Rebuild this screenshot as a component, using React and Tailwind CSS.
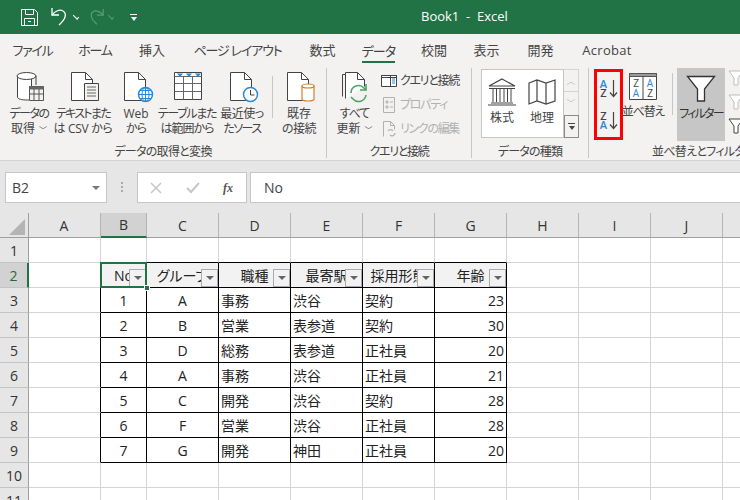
import React from 'react';

const FONT = "font-['Open_Sans','Noto_Sans_CJK_JP',sans-serif] [font-feature-settings:'palt']";

const TABS = [
  { label: 'ファイル', w: 'w-[65px]', t: 'tracking-[-1.300px]' },
  { label: 'ホーム', w: 'w-[60px]', t: 'tracking-[-1.200px]' },
  { label: '挿入', w: 'w-[54px]', t: '' },
  { label: 'ページ レイアウト', w: 'w-[117px]', t: 'tracking-[-1.200px]' },
  { label: '数式', w: 'w-[53px]', t: '' },
  { label: 'データ', w: 'w-[59px]', t: 'tracking-[-0.800px]', active: true },
  { label: '校閲', w: 'w-[52px]', t: '' },
  { label: '表示', w: 'w-[53px]', t: '' },
  { label: '開発', w: 'w-[55px]', t: '' },
  { label: 'Acrobat', w: 'w-[78px]', t: 'tracking-[0.3px]' },
];

const COLS = ['A', 'B', 'C', 'D', 'E', 'F', 'G', 'H', 'I', 'J', ''];

const HEADERS = ['No', 'グループ', '職種', '最寄駅', '採用形態', '年齢'];
const ROWS = [
  ['1', 'A', '事務', '渋谷', '契約', '23'],
  ['2', 'B', '営業', '表参道', '契約', '30'],
  ['3', 'D', '総務', '表参道', '正社員', '20'],
  ['4', 'A', '事務', '渋谷', '正社員', '21'],
  ['5', 'C', '開発', '渋谷', '契約', '28'],
  ['6', 'F', '営業', '渋谷', '正社員', '28'],
  ['7', 'G', '開発', '神田', '正社員', '20'],
];

function Doc({ children }) {
  return (
    <svg width="36" height="32" viewBox="0 0 36 32" fill="none">
      <path d="M6.5 1.5h14l7 7v21h-21z" fill="#fff" stroke="#444" />
      <path d="M20.5 1.5v7h7" stroke="#444" />
      {children}
    </svg>
  );
}

function DbIcon() {
  return (
    <svg width="36" height="32" viewBox="0 0 36 32" fill="none">
      <g transform="translate(3 0)">
        <path d="M3.500 5v21c0 2 4 3 10 3h4V5" fill="#fff" stroke="#444" />
        <ellipse cx="12.500" cy="5" rx="9.500" ry="3.500" fill="#fff" stroke="#444" />
        <path d="M22 5v9" stroke="#444" />
        <path d="M15 15h15v15H15z" fill="#f3f2f1" />
        <path d="M15.500 15.500h14v14h-14z" stroke="#555" />
        <path d="M15.500 15.500h14v3h-14z" fill="#666" />
        <path d="M15.500 23h14M20 18v11M25 18v11" stroke="#555" />
      </g>
    </svg>
  );
}

function TableIcon() {
  return (
    <svg width="32" height="30" viewBox="0 0 32 30" fill="none">
      <path d="M3.500 1.500h27v27h-27z" fill="#fff" stroke="#444" />
      <path d="M3.500 5.500h27M3.500 12.500h27M3.500 20.500h27M12.500 5.500v23M21.500 5.500v23" stroke="#666" />
      <path d="M6 2.500h6l-3 3.500zM15 2.500h6l-3 3.500zM24 2.500h6l-3 3.500z" fill="#2b88d8" />
    </svg>
  );
}

function BigButton({ w, icon, lines, chevron, t1 = '', t2 = '' }) {
  return (
    <div className={`${w} flex flex-col items-center shrink-0`}>
      <div className="h-[38px] pt-[3px] flex justify-center">{icon}</div>
      <div className="text-[12px] leading-[15px] text-[#444] text-center whitespace-nowrap">
        <div className={t1}>{lines[0]}</div>
        <div className={t2}>
          {lines[1]}
          {chevron && <span className="text-[8px] ml-[4px]">﹀</span>}
        </div>
      </div>
    </div>
  );
}

function Group({ w, label, t = '', children }) {
  return (
    <div className={`${w} shrink-0 h-[90px] flex flex-col border-r border-[#c8c6c4] mt-[3px]`}>
      <div className="flex-1 flex min-h-0">{children}</div>
      <div className={`h-[14px] text-[12px] leading-[15px] text-[#444] text-center whitespace-nowrap ${t}`}>{label}</div>
    </div>
  );
}

function SmallRow({ icon, label, disabled }) {
  return (
    <div className="h-[24px] flex items-center gap-[3px]">
      {icon}
      <span className={`text-[12px] tracking-[-1.300px] whitespace-nowrap ${disabled ? 'text-[#b1b1b1]' : 'text-[#444]'}`}>{label}</span>
    </div>
  );
}

function SortAB({ down }) {
  return (
    <div className="h-[32px] flex items-center justify-center gap-[1px]">
      <div className="flex flex-col text-[11px] leading-[9px] font-semibold w-[9px] text-center">
        <span className={down ? 'text-[#444]' : 'text-[#2b88d8]'}>{down ? 'Z' : 'A'}</span>
        <span className={down ? 'text-[#2b88d8]' : 'text-[#444]'}>{down ? 'A' : 'Z'}</span>
      </div>
      <svg width="9" height="19" viewBox="0 0 9 19" fill="none">
        <path d="M4.500 1v16M1 13.500l3.500 4 3.500-4" stroke="#444" strokeWidth="1.200" />
      </svg>
    </div>
  );
}

function FunnelSmall({ extra }) {
  return (
    <svg width="16" height="20" viewBox="0 0 16 20" fill="none">
      <path d="M1 3h14l-5 7v7H6v-7z" stroke={extra ? '#444' : '#bdbdbd'} fill="#fff" />
    </svg>
  );
}

function Ribbon() {
  return (
    <div className="h-[96px] bg-[#f3f2f1] flex text-[#444] overflow-hidden border-b border-[#d6d4d2]">
      <Group w="w-[327px]" label="データの取得と変換" t="tracking-[-0.700px]">
        <div className="flex pl-[2px]">
          <BigButton w="w-[54px]" icon={<DbIcon />} lines={['データの', '取得']} chevron t1="tracking-[-1.500px]" />
          <BigButton w="w-[54px]" lines={['テキストまた', 'は CSV から']} t1="tracking-[-1.700px]" t2="tracking-[-0.300px]" icon={
            <Doc><path d="M19.500 12.500h14v17h-14z" fill="#f3f2f1" stroke="#444" /><path d="M22 16h9M22 19h9M22 22h9M22 25h9" stroke="#666" /></Doc>
          } />
          <BigButton w="w-[52px]" lines={['Web', 'から']} t2="tracking-[-1px]" icon={
            <Doc>
              <circle cx="27.500" cy="23.500" r="7" fill="#fff" stroke="#2b88d8" strokeWidth="1.500" />
              <path d="M20.500 23.500h14M27.500 16.500v14M22 19.500h11M22 27.500h11" stroke="#2b88d8" />
              <ellipse cx="27.500" cy="23.500" rx="3.500" ry="7" stroke="#2b88d8" />
            </Doc>
          } />
          <BigButton w="w-[50px]" icon={<TableIcon />} lines={['テーブルまた', 'は範囲から']} t1="tracking-[-1.300px]" t2="tracking-[-1px]" />
          <BigButton w="w-[60px]" lines={['最近使っ', 'たソース']} t1="tracking-[-0.500px]" t2="tracking-[-1.500px]" icon={
            <Doc>
              <circle cx="26.500" cy="23.500" r="7" fill="#fff" stroke="#2b88d8" strokeWidth="1.500" />
              <path d="M26.500 19V24h4" stroke="#444" />
            </Doc>
          } />
          <div className="w-[1px] h-[42px] bg-[#c8c6c4] mt-[8px] shrink-0" />
          <BigButton w="w-[52px]" lines={['既存', 'の接続']} t2="tracking-[-0.500px]" icon={
            <Doc>
              <path d="M21 15v13c0 1.500 2 2 6 2s6-.500 6-2V15z" fill="#fff" stroke="#d67f24" strokeWidth="1.200" />
              <ellipse cx="27" cy="15" rx="6" ry="2" fill="#fff" stroke="#d67f24" strokeWidth="1.200" />
            </Doc>
          } />
        </div>
      </Group>

      <Group w="w-[145px]" label="クエリと接続" t="tracking-[-1.300px]">
        <BigButton w="w-[55px]" lines={['すべて', '更新']} chevron t1="tracking-[-1px]" icon={
          <svg width="36" height="32" viewBox="0 0 36 32" fill="none">
            <path d="M5.500 25.500V3.500h3" stroke="#444" />
            <path d="M8.500 27.500V1.500h12l7 7v7" fill="#fff" stroke="#444" />
            <path d="M20.500 1.500v7h7" stroke="#444" />
            <path d="M14 22a7.500 7.500 0 0 1 13-5l2 2" stroke="#4aa564" strokeWidth="1.600" />
            <path d="M29 13v6h-6" stroke="#4aa564" strokeWidth="1.600" />
            <path d="M29 24a7.500 7.500 0 0 1-13 4l-2-2" stroke="#4aa564" strokeWidth="1.600" />
          </svg>
        } />
        <div className="flex flex-col pt-[1px] -ml-[1px]">
          <SmallRow label="クエリと接続" icon={
            <svg width="16" height="16" viewBox="0 0 16 16" fill="none">
              <path d="M.5 2.500h15v11H.5z" fill="#fff" stroke="#444" />
              <path d="M.5 2.500h15v2H.5zM9.500 2.500v11" stroke="#444" />
              <path d="M11 6h3M11 8h3M11 10h3" stroke="#2b88d8" />
            </svg>
          } />
          <SmallRow disabled label="プロパティ" icon={
            <svg width="16" height="16" viewBox="0 0 16 16" fill="none">
              <path d="M2.500 .5h11v15h-11z" stroke="#b1b1b1" />
              <path d="M5 4h2v2H5zM5 9h2v2H5zM9 5h3M9 10h3" stroke="#b1b1b1" />
            </svg>
          } />
          <SmallRow disabled label="リンクの編集" icon={
            <svg width="16" height="16" viewBox="0 0 16 16" fill="none">
              <path d="M2.500 15.500V.5h7l4 4v4M9.500 .5v4h4" stroke="#b1b1b1" />
              <path d="M7 10a3 3 0 0 1 5 0M14 12a3 3 0 0 1-5 2" stroke="#b1b1b1" strokeWidth="1.300" />
            </svg>
          } />
        </div>
      </Group>

      <Group w="w-[117px]" label="データの種類" t="tracking-[-0.800px]">
        <div className="flex ml-[9px] h-[70px]">
          <div className="w-[83px] h-[69px] mt-[1px] bg-white border border-[#c6c6c6] flex">
            <div className="w-[40px] flex flex-col items-center shrink-0">
              <svg className="mt-[8px]" width="30" height="28" viewBox="0 0 30 28" fill="none">
                <path d="M15 1 L28 8H2zM2 10.500h26M4 25h22M1 27h28" stroke="#444" strokeWidth="1.200" />
                <path d="M6 11v13M9.500 11v13M13 11v13M17 11v13M20.500 11v13M24 11v13" stroke="#444" />
              </svg>
              <span className="text-[12px] text-[#444] mt-[3px] whitespace-nowrap">株式</span>
            </div>
            <div className="w-[40px] flex flex-col items-center shrink-0">
              <svg className="mt-[8px]" width="30" height="28" viewBox="0 0 30 28" fill="none">
                <path d="M2 5l8-3 9 3 9-3v21l-9 3-9-3-8 3zM10 2v21M19 5v21" stroke="#444" strokeWidth="1.200" />
              </svg>
              <span className="text-[12px] text-[#444] mt-[3px] whitespace-nowrap">地理</span>
            </div>
          </div>
          <div className="w-[15px] h-[69px] mt-[1px] flex flex-col">
            <div className="h-[23px] border border-l-0 border-[#d4d4d4] flex items-center justify-center text-[9px] text-[#bbb]">︿</div>
            <div className="h-[23px] border-r border-[#d4d4d4] flex items-center justify-center text-[9px] text-[#bbb]">﹀</div>
            <div className="h-[23px] border border-[#8a8a8a] flex flex-col items-center justify-center gap-[2px]">
              <div className="w-[7px] h-[1px] bg-[#444]" />
              <div className="w-0 h-0 border-x-[3.500px] border-x-transparent border-t-[4px] border-t-[#444]" />
            </div>
          </div>
        </div>
      </Group>

      <div className="flex-1 h-[90px] flex flex-col mt-[3px] min-w-0">
        <div className="h-[73px] shrink-0 flex">
          <div className="w-[29px] h-[71px] ml-[5px] mt-[1px] border-[3px] border-[#ff0000] shrink-0">
            <SortAB />
            <SortAB down />
          </div>
          <div className="w-[40px] flex flex-col items-center shrink-0">
            <svg className="mt-[4px]" width="30" height="29" viewBox="0 0 30 29" fill="none">
              <path d="M1.500 1.500h27v26h-27z" fill="#fff" stroke="#444" />
              <path d="M1.500 1.500h27v3h-27z" fill="#9a9a9a" stroke="#555" />
              <path d="M15 4.500v23" stroke="#444" />
              <text x="8" y="15" textAnchor="middle" fontSize="10" fill="#444">Z</text>
              <text x="8" y="25" textAnchor="middle" fontSize="10" fill="#2b88d8">A</text>
              <text x="22" y="15" textAnchor="middle" fontSize="10" fill="#2b88d8">A</text>
              <text x="22" y="25" textAnchor="middle" fontSize="10" fill="#444">Z</text>
            </svg>
            <span className="text-[12px] leading-[15px] tracking-[-1.200px] text-[#444] mt-[3px] whitespace-nowrap">並べ替え</span>
          </div>
          <div className="w-[1px] h-[42px] bg-[#c8c6c4] mt-[5px] ml-[9px] shrink-0" />
          <div className="w-[48px] h-[73px] ml-[4px] bg-[#c6c6c6] flex flex-col items-center shrink-0">
            <svg className="mt-[5px]" width="30" height="30" viewBox="0 0 30 30" fill="none">
              <path d="M1.500 3.500h27L18.500 16v12h-7V16z" fill="#fff" stroke="#333" strokeWidth="1.300" />
            </svg>
            <span className="text-[12px] leading-[15px] tracking-[-1.800px] text-[#333] mt-[3px] whitespace-nowrap">フィルター</span>
          </div>
          <div className="ml-[3px] flex flex-col gap-[4px] shrink-0">
            <FunnelSmall />
            <FunnelSmall />
            <FunnelSmall extra />
          </div>
        </div>
        <div className="text-[12px] leading-[15px] tracking-[-0.700px] text-[#444] whitespace-nowrap pl-[63px] mt-[3px]">並べ替えとフィルター</div>
      </div>
    </div>
  );
}

function FormulaBar() {
  return (
    <div className="h-[52px] bg-[#e6e6e6] pt-[11px] flex items-start">
      <div className="ml-[5px] w-[102px] h-[31px] bg-white border border-[#c6c6c6] flex items-center justify-between pl-[6px] pr-[6px] shrink-0">
        <span className="text-[14px] text-[#444]">B2</span>
        <div className="w-0 h-0 border-x-[4px] border-x-transparent border-t-[4px] border-t-[#777]" />
      </div>
      <div className="w-[30px] flex flex-col items-center gap-[2px] pt-[10px] shrink-0">
        <div className="w-[2px] h-[2px] bg-[#aaa]" />
        <div className="w-[2px] h-[2px] bg-[#aaa]" />
        <div className="w-[2px] h-[2px] bg-[#aaa]" />
      </div>
      <div className="w-[110px] h-[31px] bg-white border border-[#c6c6c6] flex items-center pl-[12px] shrink-0">
        <svg width="12" height="12" viewBox="0 0 12 12" fill="none">
          <path d="M1 1l10 10M11 1L1 11" stroke="#c6c6c6" strokeWidth="1.500" />
        </svg>
        <svg className="ml-[24px]" width="14" height="12" viewBox="0 0 14 12" fill="none">
          <path d="M1 6l4 4 8-9" stroke="#c6c6c6" strokeWidth="2" />
        </svg>
        <span className="ml-[23px] text-[12px] font-bold italic text-[#555] font-['Liberation_Serif',serif]">fx</span>
      </div>
      <div className="ml-[3px] flex-1 h-[31px] bg-white border-y border-l border-[#c6c6c6] flex items-center pl-[13px] text-[14px] text-[#444]">No</div>
    </div>
  );
}

function FilterButton() {
  return (
    <div className="absolute right-[0px] bottom-[0px] w-[17px] h-[18px] bg-[#f2f2f2] border border-[#a8acb2] flex items-center justify-center">
      <div className="w-0 h-0 border-x-[4px] border-x-transparent border-t-[4px] border-t-[#666]" />
    </div>
  );
}

function Cell({ col, row }) {
  // col 0 = A, table covers B..G (1..6), rows 2..9
  const inCols = col >= 1 && col <= 6;
  const inRows = row >= 2 && row <= 9;
  const blackRight = (col >= 0 && col <= 6) && inRows;
  const blackBottom = inCols && row >= 1 && row <= 9;
  let text = null;
  if (inCols && row === 2) text = HEADERS[col - 1];
  if (inCols && row > 2 && inRows) text = ROWS[row - 3][col - 1];
  const align = row === 2 || col <= 2 ? 'justify-center' : col === 6 ? 'justify-end pr-[2px]' : 'justify-start pl-[2px]';
  return (
    <div className={`relative min-w-0 flex items-center overflow-hidden whitespace-nowrap text-[14px] text-[#222] border-r border-b ${align} ${blackRight ? 'border-r-black' : 'border-r-[#d4d4d4]'} ${blackBottom ? 'border-b-black' : 'border-b-[#d4d4d4]'} ${inCols && row === 2 ? 'bg-[#f2f2f2]' : ''}`}>
      {text}
      {inCols && row === 2 && <FilterButton />}
    </div>
  );
}

function Sheet() {
  const rows = [1, 2, 3, 4, 5, 6, 7, 8, 9, 10, 11];
  return (
    <div className="relative bg-white flex-1 overflow-hidden grid grid-cols-[29px_72px_46px_72px_72px_72px_72px_72px_72px_72px_72px_18px] auto-rows-[25px] content-start">
      <div className="h-[25px] bg-[#e6e6e6] border-r border-b border-[#a0a0a0] flex items-end justify-end pr-[3px] pb-[2px]">
        <div className="w-0 h-0 border-l-[16px] border-l-transparent border-b-[16px] border-b-[#b4b4b4]" />
      </div>
      {COLS.map((c, i) => (
        <div key={i} className={`flex items-center justify-center text-[14px] text-[#333] border-r border-r-[#b4b4b4] ${c === 'B' ? 'bg-[#d2d2d2] border-b-2 border-b-[#217346] text-[#1e6b41]' : 'bg-[#e6e6e6] border-b border-b-[#a0a0a0]'} ${c === 'A' ? 'pr-[1px]' : ''}`}>{c}</div>
      ))}
      {rows.map(r => (
        <React.Fragment key={r}>
          <div className={`flex items-center justify-center text-[14px] ${r === 2 ? 'bg-[#d2d2d2] text-[#1e6b41] border-r-2 border-r-[#217346]' : 'bg-[#e6e6e6] text-[#333] border-r border-r-[#a0a0a0]'} border-b border-b-[#c4c4c4]`}>{r}</div>
          {COLS.map((_, i) => <Cell key={i} col={i} row={r} />)}
        </React.Fragment>
      ))}
      {/* active cell outline on B2 */}
      <div className="absolute left-[100px] top-[49px] w-[47px] h-[26px] border-2 border-[#217346] pointer-events-none" />
      <div className="absolute left-[144px] top-[72px] w-[6px] h-[6px] bg-[#217346] border border-white" />
    </div>
  );
}

export default function App() {
  return (
    <div className={`w-[740px] h-[500px] overflow-hidden flex flex-col ${FONT}`}>
      <div className="h-[34px] bg-[#217346] flex items-center shrink-0 relative">
        <svg className="ml-[21px]" width="17" height="17" viewBox="0 0 17 17" fill="none">
          <path d="M.5 .5h13l3 3v13H.5z" stroke="#fff" />
          <path d="M4.500 .5v5h8v-5M3.500 16.500v-7h10v7M7 12.500h3" stroke="#fff" />
        </svg>
        <svg className="ml-[12px]" width="20" height="20" viewBox="0 0 20 20" fill="none">
          <path d="M2 1v7h7" stroke="#fff" strokeWidth="1.300" />
          <path d="M2 8c3-4 8-6 11-4 4 2.500 3 8-4 14" stroke="#fff" strokeWidth="1.300" />
        </svg>
        <div className="ml-[3px] w-[6px] h-[3px] border-b border-r border-white rotate-45 -translate-y-[1px]" />
        <svg className="ml-[8px]" width="18" height="20" viewBox="0 0 20 20" fill="none">
          <path d="M18 1v7h-7" stroke="#5b9a78" strokeWidth="1.300" />
          <path d="M18 8c-3-4-8-6-11-4-4 2.500-3 8 4 14" stroke="#5b9a78" strokeWidth="1.300" />
        </svg>
        <div className="ml-[3px] w-[6px] h-[3px] border-b border-r border-[#5b9a78] rotate-45 -translate-y-[1px]" />
        <div className="ml-[16px] flex flex-col items-center gap-[2px]">
          <div className="w-[7px] h-[1px] bg-white" />
          <div className="w-0 h-0 border-x-[3.500px] border-x-transparent border-t-[4px] border-t-white" />
        </div>
        <span className="ml-[284px] text-[13px] text-white whitespace-pre">Book1  -  Excel</span>
      </div>
      <div className="h-[31px] bg-[#f3f2f1] flex shrink-0 pt-[2px]">
        {TABS.map(t => (
          <div key={t.label} className={`${t.w} ${t.t} shrink-0 h-full flex flex-col items-center justify-center relative text-[13px] text-[#444] whitespace-nowrap`}>
            <span className={t.active ? 'border-b-[2px] border-[#217346] leading-[20px] mt-[2px]' : ''}>{t.label}</span>
          </div>
        ))}
      </div>
      <Ribbon />
      <FormulaBar />
      <Sheet />
    </div>
  );
}
